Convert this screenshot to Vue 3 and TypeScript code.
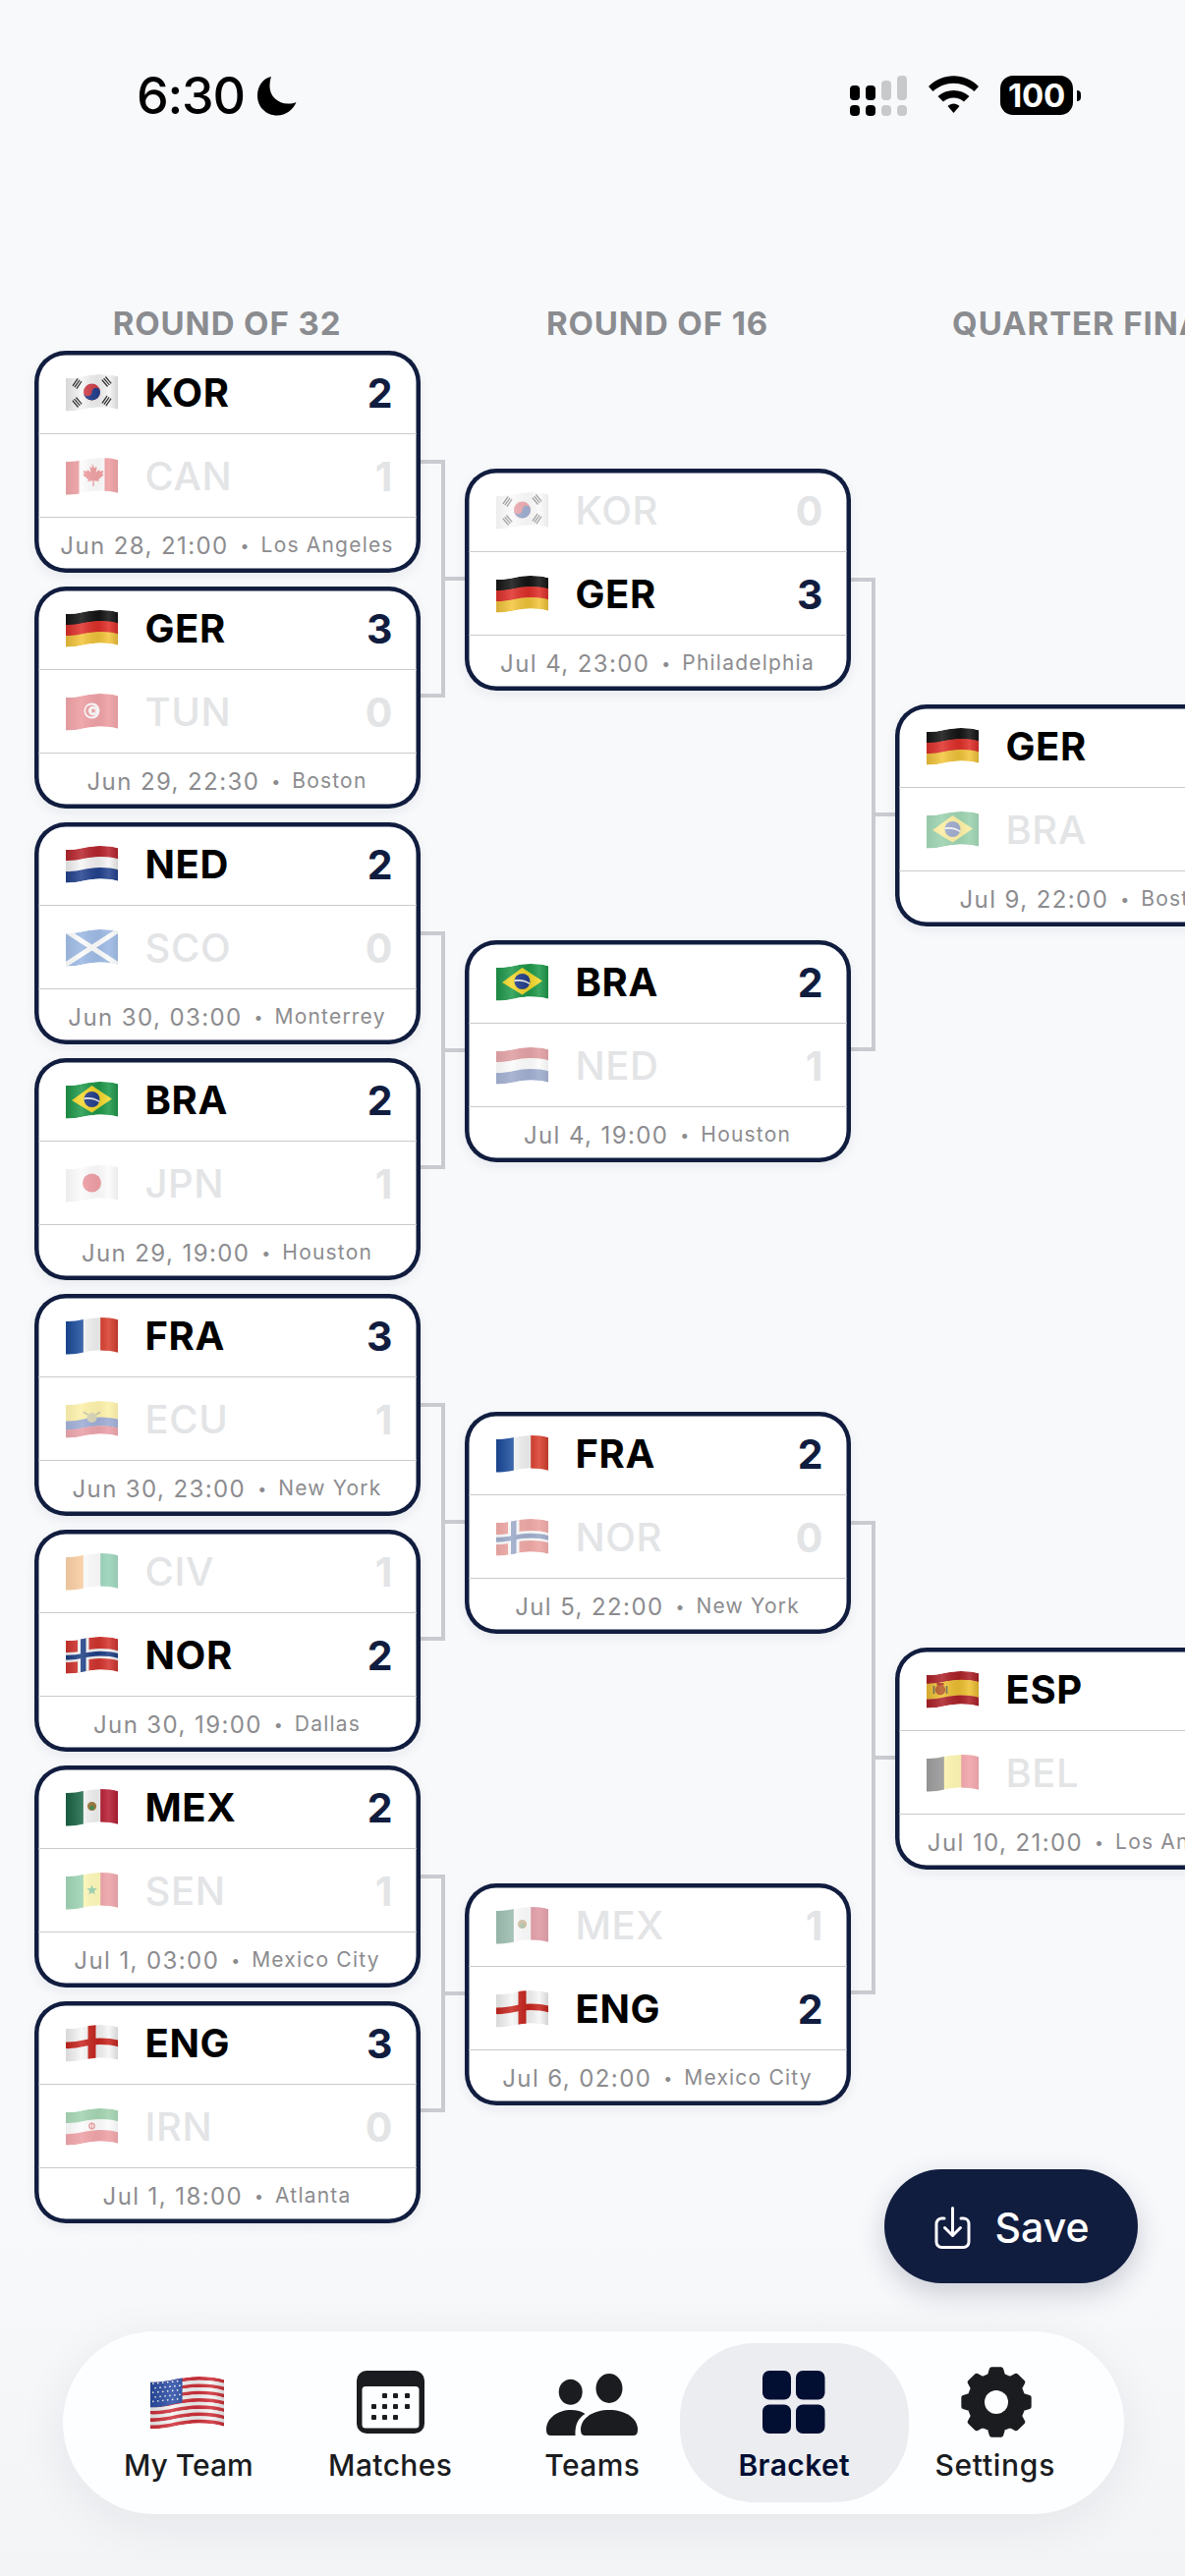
<script setup lang="ts">
type Shape = [string, string]
interface Side { code: string; score: number }
interface Match { a: Side; b: Side; date: string; venue: string }
interface Round { title: string; pairs: Match[][] }

const band = (a: number, b: number): string => {
  const p = a * 33.5
  const q = b * 33.5
  return `M0 ${4 + p}C13 ${4.5 + p} 21 ${p} 35 ${p}C42 ${p} 48 ${0.7 + p} 53 ${2.2 + p}L53 ${2.2 + q}C48 ${0.7 + q} 42 ${q} 35 ${q}C21 ${q} 13 ${4.5 + q} 0 ${4 + q}Z`
}
const vert = (a: number, b: number): string => `M${a} 0H${b}V38H${a}Z`
const circ = (x: number, y: number, r: number): string =>
  `M${x - r} ${y}a${r} ${r} 0 1 0 ${2 * r} 0a${r} ${r} 0 1 0 ${-2 * r} 0Z`
const bar = (x: number, y: number, len: number, w: number, deg: number): string => {
  const t = (deg * Math.PI) / 180
  const dx = (Math.cos(t) * len) / 2
  const dy = (Math.sin(t) * len) / 2
  const nx = (-Math.sin(t) * w) / 2
  const ny = (Math.cos(t) * w) / 2
  return `M${x - dx + nx} ${y - dy + ny}L${x + dx + nx} ${y + dy + ny}L${x + dx - nx} ${y + dy - ny}L${x - dx - nx} ${y - dy - ny}Z`
}
const star = (x: number, y: number, r: number): string => {
  let d = ''
  for (let i = 0; i < 10; i++) {
    const rad = i % 2 ? r * 0.42 : r
    const t = (i * Math.PI) / 5 - Math.PI / 2
    d += `${i ? 'L' : 'M'}${x + rad * Math.cos(t)} ${y + rad * Math.sin(t)}`
  }
  return d + 'Z'
}
const trigram = (x: number, y: number, deg: number): string => {
  const t = (deg * Math.PI) / 180
  let d = ''
  for (const k of [-2.4, 0, 2.4]) {
    d += bar(x + Math.cos(t) * k, y + Math.sin(t) * k, 9, 1.3, deg + 90)
  }
  return d
}

const usaStripes: Shape[] = Array.from({ length: 13 }, (_, i): Shape => [
  band(i / 13, (i + 1) / 13),
  i % 2 ? '#f4f4f4' : '#d0303a',
])
let usaStars = ''
for (let r = 0; r < 5; r++) {
  for (let c = 0; c < 6; c++) {
    usaStars += circ(2 + c * 3.5 + (r % 2 ? 1.6 : 0), 5 - c * 0.35 + r * 3.2, 0.62)
  }
}

const flags: Record<string, Shape[]> = {
  KOR: [
    [band(0, 1), '#f5f5f6'],
    [circ(26.5, 18, 8.5), '#d23f4c'],
    ['M18 18a4.25 4.25 0 0 0 8.5 0a4.25 4.25 0 0 1 8.5 0a8.5 8.5 0 0 1-17 0Z', '#23418f'],
    [trigram(11.5, 9.5, 35), '#222'],
    [trigram(41.5, 7.5, -40), '#222'],
    [trigram(11.5, 28.5, -40), '#222'],
    [trigram(41.5, 27, 35), '#222'],
  ],
  CAN: [
    [band(0, 1), '#f7f7f7'],
    [vert(0, 13.5), '#d9262d'],
    [vert(39.5, 53), '#d9262d'],
    ['M26.5 5.5l2.6 4.8 2.6-1.4-1 6 3-3 .9 1.8 3.7-.7-1 3.6 1.4.8-5.5 4.6.6 2-5.2-.8.2 5.5h-1.6l.2-5.5-5.2.8.6-2-5.5-4.6 1.4-.8-1-3.6 3.7.7.9-1.8 3 3-1-6 2.6 1.4Z', '#d9262d'],
  ],
  GER: [
    [band(0, 0.34), '#141414'],
    [band(0.33, 0.67), '#e1302a'],
    [band(0.66, 1), '#f4c63c'],
  ],
  TUN: [
    [band(0, 1), '#d7252e'],
    [circ(26.5, 17.5, 8), '#f9f9f9'],
    [circ(26, 17.5, 6), '#d7252e'],
    [circ(27.8, 17.5, 4.8), '#f9f9f9'],
    [star(28, 17.5, 3.2), '#d7252e'],
  ],
  NED: [
    [band(0, 0.34), '#b9252e'],
    [band(0.33, 0.67), '#f6f6f6'],
    [band(0.66, 1), '#24438f'],
  ],
  SCO: [
    [band(0, 1), '#1f5fc0'],
    [bar(26.5, 18.5, 70, 5, 33), '#f6f6f6'],
    [bar(26.5, 18.5, 70, 5, -33), '#f6f6f6'],
  ],
  BRA: [
    [band(0, 1), '#1f9a4b'],
    ['M26.5 4L47 17.5L26.5 31.5L6 19Z', '#f5d92c'],
    [circ(26.5, 18, 8), '#25408f'],
    ['M18.6 16.4c5-1 11-.2 15.6 3l-.4 1.6c-4.6-3-10-3.8-15.3-2.8Z', '#f4f4f4'],
  ],
  JPN: [
    [band(0, 1), '#f7f7f7'],
    [circ(26.5, 18, 9.5), '#d6202f'],
  ],
  FRA: [
    [band(0, 1), '#f6f6f6'],
    [vert(0, 17.8), '#1c4d9e'],
    [vert(35.2, 53), '#d9402f'],
  ],
  ECU: [
    [band(0, 0.5), '#f9df3e'],
    [band(0.49, 0.76), '#24459e'],
    [band(0.75, 1), '#cf2a3b'],
    [circ(26.5, 17, 5), '#a8a25c'],
    [bar(20, 12.5, 5, 1.5, 30), '#7d7a3c'],
    [bar(33, 12.5, 5, 1.5, -30), '#7d7a3c'],
  ],
  CIV: [
    [band(0, 1), '#f7f7f7'],
    [vert(0, 17.8), '#ee8b28'],
    [vert(35.2, 53), '#1c9c63'],
  ],
  NOR: [
    [band(0, 1), '#d5352f'],
    [vert(12, 23.5), '#f5f5f5'],
    [band(0.36, 0.66), '#f5f5f5'],
    [vert(15, 20.5), '#1e3f86'],
    [band(0.44, 0.58), '#1e3f86'],
  ],
  MEX: [
    [band(0, 1), '#f6f6f6'],
    [vert(0, 17.8), '#1a6646'],
    [vert(35.2, 53), '#b81f35'],
    [circ(26.5, 17.5, 4.6), '#a0793c'],
    [circ(26.5, 19, 2.2), '#3f8a55'],
  ],
  SEN: [
    [band(0, 1), '#fbee5e'],
    [vert(0, 17.8), '#1f9a53'],
    [vert(35.2, 53), '#d62f3c'],
    [star(26.5, 18, 5.6), '#1f9a53'],
  ],
  ENG: [
    [band(0, 1), '#f6f6f6'],
    [vert(22.5, 30.5), '#c9261f'],
    [band(0.4, 0.6), '#c9261f'],
  ],
  IRN: [
    [band(0, 0.34), '#2f9d4f'],
    [band(0.33, 0.67), '#f7f7f7'],
    [band(0.66, 1), '#d92d36'],
    [circ(26.5, 18, 3.4), '#d92d36'],
    [circ(26.5, 18, 1.9), '#f7f7f7'],
    [bar(26.5, 18, 7, 1, 90), '#d92d36'],
  ],
  ESP: [
    [band(0, 0.27), '#ad2128'],
    [band(0.26, 0.74), '#f0c133'],
    [band(0.73, 1), '#ad2128'],
    [circ(14, 19, 5.2), '#b85a24'],
    [bar(7.5, 19, 8, 1.6, 90), '#6d6a5a'],
    [bar(20.5, 19, 8, 1.6, 90), '#6d6a5a'],
    [bar(14, 13.2, 7, 2.4, 0), '#b13222'],
  ],
  BEL: [
    [band(0, 1), '#fbe94e'],
    [vert(0, 17.8), '#141414'],
    [vert(35.2, 53), '#e0323e'],
  ],
  USA: [
    ...usaStripes,
    ['M0 0H23V18.6C15 19.5 8 22.5 0 22Z', '#2a4da6'],
    [usaStars, '#f4f4f4'],
  ],
}

const m = (ac: string, as: number, bc: string, bs: number, date: string, venue: string): Match => ({
  a: { code: ac, score: as },
  b: { code: bc, score: bs },
  date,
  venue,
})

const rounds: Round[] = [
  {
    title: 'ROUND OF 32',
    pairs: [
      [m('KOR', 2, 'CAN', 1, 'Jun 28, 21:00', 'Los Angeles'), m('GER', 3, 'TUN', 0, 'Jun 29, 22:30', 'Boston')],
      [m('NED', 2, 'SCO', 0, 'Jun 30, 03:00', 'Monterrey'), m('BRA', 2, 'JPN', 1, 'Jun 29, 19:00', 'Houston')],
      [m('FRA', 3, 'ECU', 1, 'Jun 30, 23:00', 'New York'), m('CIV', 1, 'NOR', 2, 'Jun 30, 19:00', 'Dallas')],
      [m('MEX', 2, 'SEN', 1, 'Jul 1, 03:00', 'Mexico City'), m('ENG', 3, 'IRN', 0, 'Jul 1, 18:00', 'Atlanta')],
    ],
  },
  {
    title: 'ROUND OF 16',
    pairs: [
      [m('KOR', 0, 'GER', 3, 'Jul 4, 23:00', 'Philadelphia'), m('BRA', 2, 'NED', 1, 'Jul 4, 19:00', 'Houston')],
      [m('FRA', 2, 'NOR', 0, 'Jul 5, 22:00', 'New York'), m('MEX', 1, 'ENG', 2, 'Jul 6, 02:00', 'Mexico City')],
    ],
  },
  {
    title: 'QUARTER FINAL',
    pairs: [[m('GER', 2, 'BRA', 1, 'Jul 9, 22:00', 'Boston'), m('ESP', 2, 'BEL', 1, 'Jul 10, 21:00', 'Los Angeles')]],
  },
]

const gearPath = (): string => {
  const cx = 36
  const cy = 36
  const teeth = 8
  let d = ''
  for (let i = 0; i < teeth; i++) {
    const a = (i * 2 * Math.PI) / teeth - Math.PI / 2
    const s = Math.PI / teeth
    const pts: [number, number][] = [
      [27.5, a - s * 0.62],
      [33.5, a - s * 0.36],
      [33.5, a + s * 0.36],
      [27.5, a + s * 0.62],
    ]
    for (const [r, t] of pts) {
      d += `${d ? 'L' : 'M'}${(cx + r * Math.cos(t)).toFixed(2)} ${(cy + r * Math.sin(t)).toFixed(2)}`
    }
  }
  return d + 'Z'
}
const gear = gearPath()

const calendarDots: [number, number][] = [
  [28.5, 25.5], [39.5, 25.5], [51.5, 25.5],
  [17.5, 36.5], [28.5, 36.5], [39.5, 36.5], [51.5, 36.5],
  [17.5, 47.5], [28.5, 47.5], [39.5, 47.5],
]
</script>

<template>
  <div class="screen">
    <svg class="defs" width="0" height="0" aria-hidden="true">
      <defs>
        <clipPath id="wave"><path :d="band(0, 1)" /></clipPath>
        <linearGradient id="shade" x1="0" y1="0" x2="1" y2="0">
          <stop offset="0" stop-color="#000" stop-opacity="0.12" />
          <stop offset="0.3" stop-color="#fff" stop-opacity="0.14" />
          <stop offset="0.62" stop-color="#000" stop-opacity="0.08" />
          <stop offset="0.82" stop-color="#fff" stop-opacity="0.12" />
          <stop offset="1" stop-color="#000" stop-opacity="0.14" />
        </linearGradient>
      </defs>
    </svg>

    <header class="status">
      <div class="status-left">
        <span class="time">6:30</span>
        <svg class="moon" width="40" height="40" viewBox="0 0 40 40">
          <path d="M14 0C5 2 0 10 0 19.5C0 31 9 39.5 20 39.5C29 39.5 36 34 39.5 26C37 27 34.5 27.5 31 27.5C21 27.5 12.5 20 12.5 10C12.5 6.5 13 3 14 0Z" />
        </svg>
      </div>
      <div class="status-right">
        <svg width="58" height="41" viewBox="0 0 58 41">
          <rect x="0" y="10" width="10" height="15" rx="4" />
          <rect x="16" y="10" width="10" height="15" rx="4" />
          <rect x="32" y="5" width="10" height="20" rx="4" fill="#c8c9cb" />
          <rect x="48" y="0" width="10" height="25" rx="4" fill="#c8c9cb" />
          <rect x="0" y="30" width="10" height="11" rx="4" />
          <rect x="16" y="30" width="10" height="11" rx="4" />
          <rect x="32" y="30" width="10" height="11" rx="4" fill="#c8c9cb" />
          <rect x="48" y="30" width="10" height="11" rx="4" fill="#c8c9cb" />
        </svg>
        <svg width="51" height="38" viewBox="0 0 51 38">
          <path d="M0 11C14-3.5 37-3.5 51 11L46.5 16C34 5 17 5 4.5 16Z" />
          <path d="M9.5 21C18 13 33 13 41.5 21L36 26.5C30 21 21 21 15 26.5Z" />
          <path d="M19.5 31C23 27.5 28 27.5 31.5 31L25.5 38Z" />
        </svg>
        <div class="battery">100</div>
      </div>
    </header>

    <main class="bracket">
      <section v-for="(round, r) in rounds" :key="round.title" class="round" :class="`round-${r}`">
        <h2 class="round-title">{{ round.title }}</h2>
        <div v-for="(pair, p) in round.pairs" :key="p" class="pair">
          <div v-for="match in pair" :key="match.date" class="slot">
            <article class="card">
              <div
                v-for="side in [match.a, match.b]"
                :key="side.code"
                class="row"
                :class="{ lost: side.score < Math.max(match.a.score, match.b.score) }"
              >
                <svg class="flag" width="53" height="38" viewBox="0 0 53 38">
                  <g clip-path="url(#wave)">
                    <path v-for="(s, i) in flags[side.code]" :key="i" :d="s[0]" :fill="s[1]" />
                    <path :d="band(0, 1)" fill="url(#shade)" />
                  </g>
                </svg>
                <span class="code">{{ side.code }}</span>
                <span class="score">{{ side.score }}</span>
              </div>
              <footer class="meta">
                <span class="date">{{ match.date }}</span>
                <span class="dot">•</span>
                <span class="venue">{{ match.venue }}</span>
              </footer>
            </article>
          </div>
          <span class="link"></span>
        </div>
      </section>
    </main>

    <button class="save">
      <svg width="37" height="43" viewBox="0 0 37 43" fill="none" stroke="#fff" stroke-width="3" stroke-linecap="round" stroke-linejoin="round">
        <path d="M10 12H7.5a5.5 5.5 0 0 0-5.5 5.5V36a5.5 5.5 0 0 0 5.5 5.5h22a5.5 5.5 0 0 0 5.5-5.5V17.5A5.5 5.5 0 0 0 29.5 12H27" />
        <path d="M18.5 1.5V29M10.5 21.5l8 8 8-8" />
      </svg>
      <span>Save</span>
    </button>

    <nav class="tabs">
      <div class="tab">
        <svg class="tab-icon usa" width="75" height="54" viewBox="0 0 53 38">
          <g clip-path="url(#wave)">
            <path v-for="(s, i) in flags.USA" :key="i" :d="s[0]" :fill="s[1]" />
            <path :d="band(0, 1)" fill="url(#shade)" />
          </g>
        </svg>
        <span>My Team</span>
      </div>
      <div class="tab">
        <svg class="tab-icon" width="69" height="64" viewBox="0 0 69 64">
          <path fill-rule="evenodd" d="M10 0H59A10 10 0 0 1 69 10V54A10 10 0 0 1 59 64H10A10 10 0 0 1 0 54V10A10 10 0 0 1 10 0ZM9 16A3.5 3.5 0 0 0 5.500 19.500V55A3.500 3.500 0 0 0 9 58.500H60A3.500 3.500 0 0 0 63.500 55V19.500A3.500 3.500 0 0 0 60 16Z" />
          <rect v-for="(d, i) in calendarDots" :key="i" :x="d[0] - 2.5" :y="d[1] - 2.5" width="5" height="5" rx="1" />
        </svg>
        <span>Matches</span>
      </div>
      <div class="tab">
        <svg class="tab-icon" width="93" height="66" viewBox="0 0 93 66">
          <ellipse cx="24.700" cy="21.700" rx="12" ry="13" />
          <ellipse cx="64" cy="18" rx="13.500" ry="15" />
          <path d="M35 60C35 48 48 40 64 40C80 40 93 48 93 60C93 63 92 66 89 66H39C36 66 35 63 35 60Z" />
          <path d="M0 60C0 48 12 40 25 40C31 40 36 41.500 39.500 44C33 48 29 54 29.500 66H4C1 66 0 63 0 60Z" />
        </svg>
        <span>Teams</span>
      </div>
      <div class="tab active">
        <svg class="tab-icon" width="64" height="64" viewBox="0 0 64 64">
          <rect x="0" y="0" width="29" height="29.500" rx="7" />
          <rect x="34" y="0" width="29.500" height="29.500" rx="7" />
          <rect x="0" y="34.500" width="29" height="29.500" rx="7" />
          <rect x="34" y="34.500" width="29.500" height="29.500" rx="7" />
        </svg>
        <span>Bracket</span>
      </div>
      <div class="tab settings">
        <svg class="tab-icon" width="72" height="72" viewBox="0 0 72 72">
          <path :d="gear" stroke="#1a1c1f" stroke-width="5" stroke-linejoin="round" />
          <circle cx="36" cy="36" r="12" fill="#fdfeff" />
        </svg>
        <span>Settings</span>
      </div>
    </nav>
  </div>
</template>

<style scoped>
.screen {
  position: relative;
  width: 1206px;
  height: 2622px;
  overflow: hidden;
  background: linear-gradient(180deg, #f8f9fb 0, #f8f9fb 2250px, #f3f4f6 2622px);
  font-family: Inter, "Liberation Sans", sans-serif;
  color: #000;
}
.defs {
  position: absolute;
}
.status {
  display: flex;
  justify-content: space-between;
  height: 305px;
  box-sizing: border-box;
  padding: 78px 106px 0 139px;
}
.status-left {
  display: flex;
  align-items: flex-start;
  gap: 13px;
}
.time {
  font-size: 52px;
  font-weight: 500;
  line-height: 40px;
  letter-spacing: -1.2px;
}
.status-right {
  display: flex;
  align-items: flex-start;
  gap: 22px;
  margin-top: -1px;
}
.battery {
  position: relative;
  width: 74px;
  height: 40px;
  margin-right: 8px;
  border-radius: 13px;
  background: #000;
  color: #fff;
  font-size: 33px;
  font-weight: 700;
  line-height: 40px;
  letter-spacing: -0.3px;
  text-align: center;
}
.battery::after {
  content: "";
  position: absolute;
  left: 78px;
  top: 15px;
  width: 4px;
  height: 11px;
  border-radius: 0 6px 6px 0;
  background: #000;
}
.bracket {
  display: flex;
  gap: 45px;
  padding-left: 34.5px;
}
.round {
  flex: 0 0 393px;
}
.round-title {
  margin: 0;
  height: 45px;
  color: #8a8c90;
  font-size: 33px;
  font-weight: 700;
  line-height: 48px;
  letter-spacing: 0.9px;
  text-align: center;
  white-space: nowrap;
}
.pair {
  position: relative;
}
.slot {
  display: flex;
  align-items: center;
  position: relative;
  z-index: 1;
}
.round-0 .slot {
  height: 240px;
}
.round-1 .slot {
  height: 480px;
}
.round-2 .slot {
  height: 960px;
}
.link {
  position: absolute;
  left: 100%;
  top: 25%;
  bottom: 25%;
  width: 21px;
  box-sizing: content-box;
  border: 4px solid #c9cbd0;
  border-left: none;
  margin-top: -2px;
}
.link::after {
  content: "";
  position: absolute;
  left: 100%;
  top: 50%;
  margin-top: -2px;
  margin-left: 4px;
  width: 21px;
  height: 4px;
  background: #c9cbd0;
}
.card {
  width: 393px;
  height: 226px;
  border-radius: 32px;
  background: #fff;
  box-shadow: inset 0 0 0 4.5px #111d3f, 0 4px 12px rgba(17, 29, 63, 0.07);
}
.row {
  display: flex;
  align-items: center;
  height: 85px;
  box-sizing: border-box;
  margin: 0 4px;
  padding: 2px 24px 0 28px;
  border-bottom: 1.5px solid #cacacc;
}
.flag {
  flex: none;
}
.code {
  margin-left: 28px;
  flex: 1;
  font-size: 40px;
  font-weight: 700;
  line-height: 1;
  letter-spacing: 0.6px;
}
.score {
  color: #111d3f;
  font-size: 41px;
  font-weight: 700;
  line-height: 1;
}
.lost .flag {
  opacity: 0.45;
}
.lost .code {
  color: #e3e4e6;
  font-weight: 500;
}
.lost .score {
  color: #e3e4e6;
}
.meta {
  display: flex;
  align-items: center;
  justify-content: center;
  height: 56px;
  color: #8c8c8f;
  white-space: nowrap;
}
.date {
  font-size: 24px;
  letter-spacing: 1.4px;
}
.dot {
  margin: 0 12px;
  font-size: 16px;
}
.venue {
  margin-top: -2px;
  font-size: 21px;
  letter-spacing: 1.2px;
}
.save {
  position: absolute;
  left: 900px;
  top: 2208px;
  display: flex;
  align-items: center;
  justify-content: center;
  gap: 25px;
  width: 258px;
  height: 116px;
  padding: 2px 0 0 1px;
  border: none;
  border-radius: 58px;
  background: #111d3f;
  color: #fff;
  font: 500 41px Inter, "Liberation Sans", sans-serif;
  box-shadow: 0 10px 28px rgba(17, 29, 63, 0.2);
}
.tabs {
  position: absolute;
  left: 64px;
  top: 2373px;
  display: grid;
  grid-template-columns: repeat(5, 205.5px);
  width: 1080px;
  height: 186px;
  box-sizing: border-box;
  padding-left: 25px;
  border-radius: 93px;
  background: #fdfeff;
  box-shadow: 0 10px 50px rgba(20, 24, 40, 0.07);
}
.tab {
  position: relative;
  display: flex;
  flex-direction: column;
  align-items: center;
  color: #1a1c1f;
  fill: #1a1c1f;
  font-size: 30px;
  font-weight: 500;
  line-height: 36px;
}
.tab-icon {
  position: absolute;
  top: 40px;
}
.tab span {
  position: absolute;
  top: 117.5px;
  letter-spacing: 0.4px;
  white-space: nowrap;
}
.tab:nth-child(1) span {
  letter-spacing: 0;
}
.usa {
  top: 46px;
  margin-left: -3px;
}
.settings .tab-icon {
  top: 36px;
}
.settings span {
  letter-spacing: 0.7px;
  margin-left: -2px;
}
.active {
  color: #020f33;
  fill: #020f33;
  font-weight: 600;
}
.active span,
.active .tab-icon {
  z-index: 1;
}
.active::before {
  content: "";
  position: absolute;
  left: -13.75px;
  top: 12px;
  width: 233px;
  height: 162px;
  border-radius: 76px;
  background: #ecedf0;
}
</style>

<style>
html,
body {
  margin: 0;
  background: #f8f9fb;
}
</style>
